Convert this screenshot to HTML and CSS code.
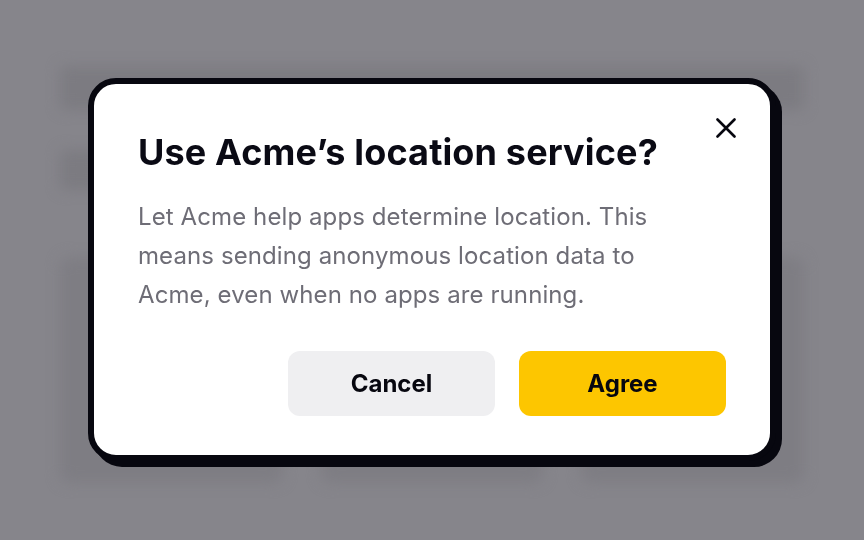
FILE: index.html
```html
<!DOCTYPE html>
<html lang="en">
<head>
<meta charset="utf-8">
<title>Location service</title>
<link rel="stylesheet" href="styles.css">
</head>
<body>
<div class="backdrop">
  <div class="page">
    <div class="topbar"></div>
    <div class="row"><div class="chip"></div></div>
    <div class="cards">
      <div class="card"></div>
      <div class="card"></div>
      <div class="card"></div>
    </div>
  </div>
</div>
<div class="overlay">
  <div class="dialog" role="dialog" aria-labelledby="dlg-title">
    <button class="close" aria-label="Close">
      <svg width="20" height="20" viewBox="0 0 20 20" fill="none" stroke="#07070f" stroke-width="2.6" stroke-linecap="round"><path d="M1.5 1.5L18.5 18.5M18.5 1.5L1.5 18.5"/></svg>
    </button>
    <h2 class="title" id="dlg-title">Use Acme’s location service?</h2>
    <p class="text">Let Acme help apps determine location. This means sending anonymous location data to Acme, even when no apps are running.</p>
    <div class="actions">
      <button class="btn btn-cancel">Cancel</button>
      <button class="btn btn-agree">Agree</button>
    </div>
  </div>
</div>
</body>
</html>
```
FILE: styles.css
```css
html, body {
  margin: 0;
  padding: 0;
  width: 864px;
  height: 540px;
  overflow: hidden;
  background: #86858b;
  font-family: "Inter", "Noto Sans", sans-serif;
}

.backdrop {
  width: 864px;
  height: 540px;
  overflow: hidden;
}

.page {
  padding: 66px 60px 0 60px;
  display: flex;
  flex-direction: column;
  gap: 40px;
  filter: blur(7px);
}

.topbar {
  height: 44px;
  background: #7c7b81;
  border-radius: 6px;
}

.row {
  height: 40px;
  display: flex;
}

.chip {
  width: 40px;
  background: #7c7b81;
  border-radius: 6px;
}

.cards {
  margin-top: 27px;
  display: flex;
  gap: 38px;
}

.card {
  flex: 1;
  height: 226px;
  background: #7e7d83;
  border-radius: 10px;
}

.overlay {
  position: fixed;
  inset: 0;
  display: flex;
  align-items: center;
  justify-content: center;
}

.dialog {
  position: relative;
  box-sizing: border-box;
  width: 688px;
  margin-top: -1px;
  padding: 48px 44px 39px 44px;
  background: #ffffff;
  border: 6px solid #07070f;
  border-radius: 28px;
  box-shadow: 6px 6px 0 #07070f;
}

.close {
  position: absolute;
  top: 34px;
  right: 34px;
  width: 20px;
  height: 20px;
  padding: 0;
  border: 0;
  background: none;
  display: flex;
  cursor: pointer;
}

.title {
  margin: 0;
  font-size: 36px;
  line-height: 40px;
  font-weight: 700;
  color: #0a0a14;
  letter-spacing: 0.15px;
}

.text {
  margin: 25px 0 0 0;
  max-width: 540px;
  font-size: 24px;
  line-height: 39px;
  font-weight: 400;
  color: #6e6d76;
  letter-spacing: 0.1px;
}

.actions {
  margin-top: 37px;
  display: flex;
  justify-content: flex-end;
  gap: 24px;
}

.btn {
  width: 207px;
  height: 65px;
  border: 0;
  border-radius: 12px;
  font-family: "Inter", "Noto Sans", sans-serif;
  font-size: 24px;
  font-weight: 700;
  color: #07070f;
  cursor: pointer;
}

.btn-cancel {
  background: #efeff1;
}

.btn-agree {
  background: #fdc600;
}
```
